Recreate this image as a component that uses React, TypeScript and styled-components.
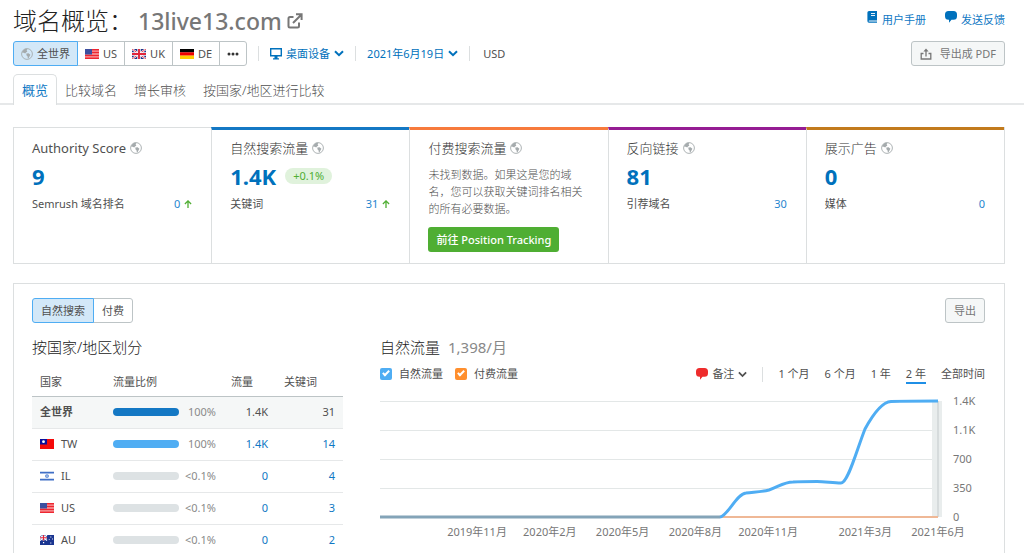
import React from 'react';
import styled, { createGlobalStyle, css } from 'styled-components';

const blue = '#0071bc';
const linkBlue = '#0f78c4';
const line = '#dcdfe0';

const Global = createGlobalStyle`
  *, *::before, *::after { box-sizing: border-box; }
  body { margin: 0; background: #fff; }
  body, button, select, input {
    font-family: "Noto Sans", "Noto Sans CJK SC", sans-serif;
    font-size: 11px;
    line-height: 16px;
    color: #505050;
  }
  body::-webkit-scrollbar { display: none; }
  html { scrollbar-width: none; }
  h1, h2, h3, p { margin: 0; font-weight: 300; }
  a { text-decoration: none; color: ${linkBlue}; }
  button { cursor: pointer; }
  svg { display: block; flex: none; }
`;

const Header = styled.header`
  padding: 7px 19px 0 13px;
`;
const HeaderRow = styled.div`
  display: flex;
  justify-content: space-between;
  align-items: flex-start;
`;
const Title = styled.h1`
  display: flex;
  align-items: center;
  font-size: 24px;
  line-height: 28px;
  color: #222;
`;
const Domain = styled.a`
  display: flex;
  align-items: center;
  gap: 5px;
  margin-left: 5px;
  font-size: 23px;
  line-height: 26px;
  font-weight: 500;
  color: #777;
`;
const HelpLinks = styled.nav`
  display: flex;
  gap: 19px;
  padding-top: 4px;
`;
const HelpLink = styled.a`
  display: flex;
  align-items: flex-start;
  gap: 4px;
  line-height: 18px;
`;
const Toolbar = styled.div`
  display: flex;
  align-items: center;
  margin-top: 6px;
`;
const Segments = styled.div`
  display: flex;
`;
const Segment = styled.button<{ $active?: boolean; $pad?: number }>`
  display: flex;
  align-items: center;
  gap: 4px;
  height: 25px;
  padding: 0 ${p => p.$pad ?? 7}px;
  margin-left: -1px;
  border: 1px solid #bdc4c6;
  background: #fff;
  white-space: nowrap;
  &:first-child { margin-left: 0; border-radius: 3px 0 0 3px; }
  &:last-child { border-radius: 0 3px 3px 0; }
  ${p => p.$active && css`
    position: relative;
    border-color: #4fadf3;
    background: #d3e8f8;
  `}
`;
const Divider = styled.span`
  width: 1px;
  height: 15px;
  background: ${line};
`;
const Filters = styled.div`
  display: flex;
  align-items: center;
  gap: 11px;
  flex: 1;
  margin-left: 11px;
`;
const Picker = styled.label`
  display: flex;
  align-items: center;
  gap: 4px;
  color: ${blue};
`;
const Select = styled.select`
  appearance: none;
  field-sizing: content;
  padding: 0;
  border: 0;
  background: none;
  color: inherit;
`;
const Currency = styled.span`
  padding-left: 2px;
`;
const GreyButton = styled.button`
  display: flex;
  align-items: center;
  gap: 8px;
  height: 25px;
  padding: 0 8px;
  border: 1px solid #bdc4c6;
  border-radius: 3px;
  background: #f5f7f7;
  color: #777;
`;
const TabBar = styled.nav`
  display: flex;
  gap: 17px;
  height: 31px;
  margin-top: 8px;
  padding-left: 13px;
  border-bottom: 2px solid #e6e8e9;
`;
const Tab = styled.a<{ $active?: boolean }>`
  height: 31px;
  font-size: 13px;
  line-height: 32px;
  font-weight: 300;
  color: #505050;
  ${p => p.$active && css`
    margin-right: -9px;
    padding: 0 8px;
    border: 1px solid ${line};
    border-bottom: 0;
    border-radius: 5px 5px 0 0;
    background: #fff;
    line-height: 30px;
    font-weight: 400;
    color: ${linkBlue};
  `}
`;
const Main = styled.main`
  display: flex;
  flex-direction: column;
  gap: 19px;
  padding: 22px 19px 20px 13px;
`;
const Cards = styled.section`
  display: grid;
  grid-template-columns: repeat(5, 1fr);
  min-height: 137px;
  border: 1px solid ${line};
  border-width: 0 1px 1px 0;
`;
const Card = styled.article<{ $accent?: string }>`
  padding: ${p => (p.$accent ? 8 : 10)}px 19px 10px 18px;
  border-left: 1px solid ${line};
  border-top: ${p => (p.$accent ? `3px solid ${p.$accent}` : `1px solid ${line}`)};
`;
const CardTitle = styled.h2`
  display: flex;
  align-items: center;
  gap: 4px;
  font-size: 13px;
  line-height: 20px;
  color: #333;
  &:lang(en) { font-weight: 400; color: #505050; }
`;
const Figure = styled.div`
  display: flex;
  align-items: center;
  gap: 9px;
  margin: 4px 0 5px;
  font-size: 22px;
  line-height: 28px;
  font-weight: 700;
  color: ${blue};
`;
const Badge = styled.span`
  padding: 0 8px;
  border-radius: 8px;
  background: #e0f2dc;
  font-size: 11px;
  line-height: 16px;
  font-weight: 400;
  color: #4fae33;
`;
const Stat = styled.div`
  display: flex;
  justify-content: space-between;
  line-height: 18px;
`;
const StatValue = styled.a`
  display: flex;
  align-items: center;
  gap: 4px;
  color: #1f86cf;
`;
const Note = styled.p`
  margin: 8px 0 10px;
  line-height: 17px;
  color: #505050;
`;
const GreenButton = styled.button`
  height: 25px;
  padding: 0 8px;
  border: 0;
  border-radius: 3px;
  background: #4fae33;
  font-weight: 500;
  color: #fff;
  white-space: nowrap;
`;
const Panel = styled.section`
  padding: 14px 19px 20px 18px;
  border: 1px solid ${line};
`;
const PanelTop = styled.div`
  display: flex;
  justify-content: space-between;
`;
const Columns = styled.div`
  display: grid;
  grid-template-columns: 311px 1fr;
  gap: 37px;
  margin-top: 12px;
`;
const SectionTitle = styled.h3`
  display: flex;
  gap: 8px;
  font-size: 15px;
  line-height: 24px;
  color: #222;
`;
const Total = styled.span`
  font-weight: 400;
  color: #888;
`;
const Table = styled.table`
  width: 100%;
  margin-top: 10px;
  border-collapse: collapse;
  table-layout: fixed;
  th { font-weight: 400; }
`;
const HeadCell = styled.th<{ $right?: number }>`
  height: 27px;
  padding: 0 ${p => p.$right ?? 0}px 0 ${p => (p.$right ? 0 : 8)}px;
  border-bottom: 1px solid #bdc4c6;
  text-align: ${p => (p.$right ? 'right' : 'left')};
`;
const Row = styled.tr<{ $total?: boolean }>`
  height: 32px;
  border-bottom: 1px solid #e6e8e9;
  background: ${p => (p.$total ? '#f5f7f7' : '#fff')};
`;
const Cell = styled.td<{ $right?: boolean }>`
  padding: 0 8px;
  text-align: ${p => (p.$right ? 'right' : 'left')};
`;
const Country = styled.span<{ $bold?: boolean }>`
  display: flex;
  align-items: center;
  gap: 7px;
  font-weight: ${p => (p.$bold ? 700 : 400)};
`;
const Share = styled.div`
  display: flex;
  align-items: center;
  justify-content: space-between;
  color: #8a8a8a;
`;
const Bar = styled.span<{ $color: string }>`
  width: 66px;
  height: 8px;
  border-radius: 4px;
  background: ${p => p.$color};
`;
const Controls = styled.div`
  display: flex;
  align-items: center;
  justify-content: space-between;
  margin-top: 5px;
  height: 20px;
`;
const Group = styled.div<{ $gap: number }>`
  display: flex;
  align-items: center;
  gap: ${p => p.$gap}px;
`;
const CheckLabel = styled.label`
  display: flex;
  align-items: center;
  gap: 7px;
`;
const Check = styled.input<{ $color: string }>`
  appearance: none;
  display: flex;
  justify-content: center;
  width: 12px;
  height: 12px;
  margin: 0;
  border-radius: 2px;
  background: ${p => p.$color};
  &:checked::after {
    content: '';
    width: 4px;
    height: 7px;
    margin-top: 1px;
    border: solid #fff;
    border-width: 0 2px 2px 0;
    transform: rotate(45deg);
  }
`;
const PlainButton = styled.button<{ $active?: boolean }>`
  display: flex;
  align-items: center;
  gap: 4px;
  padding: 2px 0 0;
  border: 0;
  border-bottom: 2px solid ${p => (p.$active ? '#1f8fe6' : 'transparent')};
  background: none;
  white-space: nowrap;
`;
const ChartBox = styled.div`
  margin-top: 16px;
  padding-right: 47px;
`;
const ChartSvg = styled.svg`
  width: 100%;
  height: 140px;
  overflow: visible;
  text { font-size: 11px; fill: #777; }
`;

const Globe = ({ color = '#a5abad' }: { color?: string }) => (
  <svg width="12" height="12" viewBox="0 0 12 12">
    <circle cx="6" cy="6" r="5.4" fill="none" stroke={color} strokeWidth="0.9" />
    <path d="M1.2 4C2 2 3.5 1 5.2 .8L6.4 1.6 5.6 2.6 6.4 3.4 5 4.4 4.2 5.4 2.8 4.8 1.4 4.8z" fill={color} />
    <path d="M5.4 5.6L7.6 5.2 9.4 6.8 8.6 8.2 7.4 10.4 6.8 10.2 6.6 8.4 5.4 7.2z" fill={color} />
  </svg>
);

const Chevron = ({ weight = 2, size = 10 }: { weight?: number; size?: number }) => (
  <svg width={size} height="7" viewBox="0 0 10 7" fill="none" stroke="currentColor" strokeWidth={weight}>
    <path d="M1 1.2L5 5.2 9 1.2" />
  </svg>
);

const UpArrow = () => (
  <svg width="8" height="8" viewBox="0 0 8 8" fill="none" stroke="#4fae33" strokeWidth="1.3">
    <path d="M4 8V1M.9 4L4 .9 7.1 4" />
  </svg>
);

const Bubble = ({ color, size = 12 }: { color: string; size?: number }) => (
  <svg width={size} height={size} viewBox="0 0 12 12">
    <path d="M3.5 0h5A3.5 3.5 0 0 1 12 3.500v1.800A3.500 3.500 0 0 1 8.500 8.800H6.500L4 11.800V8.800H3.500A3.500 3.500 0 0 1 0 5.300V3.500A3.500 3.500 0 0 1 3.500 0z" fill={color} />
  </svg>
);

const flags: Record<string, React.ReactNode> = {
  US: (
    <>
      <path fill="#f7a3a5" d="M0 0h14v10H0z" />
      <path stroke="#ee2630" strokeWidth="1.5" d="M0 .8h14M0 3.600h14M0 6.400h14M0 9.200h14" />
      <path fill="#3c4f9f" d="M0 0h7v5.500H0z" />
    </>
  ),
  UK: (
    <>
      <path fill="#1f3488" d="M0 0h14v10H0z" />
      <path stroke="#fff" strokeWidth="2" d="M0 0l14 10M14 0L0 10" />
      <path stroke="#e0243a" strokeWidth=".8" d="M0 0l14 10M14 0L0 10" />
      <path stroke="#fff" strokeWidth="3.400" d="M7 0v10M0 5h14" />
      <path stroke="#e0243a" strokeWidth="1.900" d="M7 0v10M0 5h14" />
    </>
  ),
  DE: (
    <>
      <path fill="#000" d="M0 0h14v3.400H0z" />
      <path fill="#e00" d="M0 3.300h14v3.400H0z" />
      <path fill="#fc0" d="M0 6.600h14V10H0z" />
    </>
  ),
  TW: (
    <>
      <path fill="#f50a0a" d="M0 0h14v10H0z" />
      <path fill="#0a0f9c" d="M0 0h7v5.500H0z" />
      <circle cx="3.500" cy="2.700" r="1.400" fill="#fff" />
    </>
  ),
  IL: (
    <>
      <path fill="#fff" d="M0 0h14v10H0z" />
      <path fill="#3f6fc6" d="M0 .8h14v1.600H0zM0 7.800h14v1.600H0z" />
      <path fill="none" stroke="#5b8ad6" strokeWidth=".7" d="M7 3.200l1.700 2.800H5.300zM7 7L5.300 4.200h3.400z" />
    </>
  ),
  AU: (
    <>
      <path fill="#1a3590" d="M0 0h14v10H0z" />
      <path stroke="#fff" strokeWidth="1.200" d="M0 0l7 5.500M7 0L0 5.500" />
      <path stroke="#fff" strokeWidth="2" d="M3.500 0v5.500M0 2.700h7" />
      <path stroke="#e0243a" strokeWidth="1.100" d="M3.500 0v5.500M0 2.700h7" />
      <path fill="#fff" d="M3 7h1.200v1.200H3zM10.300 1.500h1v1h-1zM10.300 7.500h1v1h-1zM8.800 4.200h.9v.9h-.9zM12 3.600h.9v.9H12z" />
    </>
  ),
};

const Flag = ({ code }: { code: string }) => (
  <svg width="14" height="10" viewBox="0 0 14 10">{flags[code]}</svg>
);

const rows = [
  { code: 'TW', share: '100%', color: '#4fadf3', traffic: '1.4K', keywords: '14' },
  { code: 'IL', share: '<0.1%', color: '#dde2e4', traffic: '0', keywords: '4' },
  { code: 'US', share: '<0.1%', color: '#dde2e4', traffic: '0', keywords: '3' },
  { code: 'AU', share: '<0.1%', color: '#dde2e4', traffic: '0', keywords: '2' },
];

const months = [
  { label: '2019年11月', index: 4 },
  { label: '2020年2月', index: 7 },
  { label: '2020年5月', index: 10 },
  { label: '2020年8月', index: 13 },
  { label: '2020年11月', index: 16 },
  { label: '2021年3月', index: 20 },
  { label: '2021年6月', index: 23 },
];

const TrafficChart = () => (
  <ChartBox>
    <ChartSvg role="img" aria-label="自然流量">
      {['1.4K', '1.1K', '700', '350', '0'].map((label, i) => (
        <g key={label}>
          <line x1="0" x2="100%" y1={1.5 + i * 29} y2={1.5 + i * 29} stroke="#e3e7e7" />
          <text x="100%" y={5 + i * 29} dx="15">{label}</text>
        </g>
      ))}
      <svg x="100%" y="1" overflow="visible">
        <rect x="-6" width="10" height="116" fill="#e9eded" />
        <line y2="116" stroke="#c3c9cb" />
      </svg>
      <svg width="100%" height="120" viewBox="0 0 558 120" preserveAspectRatio="none" fill="none" overflow="visible">
        <path d="M0 117H558" stroke="#efb896" strokeWidth="2" />
        <path d="M0 117H340" stroke="#84a4b8" strokeWidth="3" />
        <path
          d="M340 117C348 116 356 94 366 93C374 92 382 92 389 90C398 87 404 82 413 82C421 81.500 429 81.500 437 81.500C445 81.500 453 83 461 83C468 83 476 52 485 29C491 18 501 2 511 1.500C527 1 542 1 558 1"
          stroke="#4fadf3"
          strokeWidth="3"
        />
      </svg>
      {months.map(m => (
        <text key={m.label} x={`${(m.index / 23) * 100}%`} y="136" textAnchor="middle">{m.label}</text>
      ))}
    </ChartSvg>
  </ChartBox>
);

export default function App() {
  return (
    <>
      <Global />
      <Header>
        <HeaderRow>
          <Title>
            域名概览：
            <Domain href="#domain">
              13live13.com
              <svg width="16" height="16" viewBox="0 0 16 16" fill="none" stroke="#777" strokeWidth="2">
                <path d="M6.500 4H3Q1.500 4 1.500 5.500V13Q1.500 14.500 3 14.500H10.500Q12 14.500 12 13V9.500M6 10L14 2M9 1.200h5.600V7" />
              </svg>
            </Domain>
          </Title>
          <HelpLinks>
            <HelpLink href="#manual">
              <svg width="11" height="12" viewBox="0 0 11 12">
                <path d="M2 0h8v9.400H2.400q-.8 0-.8.600t.8.600H10V11.700H2Q.4 11.700 .4 10V1.600Q.4 0 2 0z" fill={blue} />
                <path d="M4 2.500h4M4 4.500h4" stroke="#fff" strokeWidth=".9" />
              </svg>
              用户手册
            </HelpLink>
            <HelpLink href="#feedback"><Bubble color={blue} />发送反馈</HelpLink>
          </HelpLinks>
        </HeaderRow>
        <Toolbar>
          <Segments>
            <Segment $active><Globe />全世界</Segment>
            <Segment><Flag code="US" />US</Segment>
            <Segment><Flag code="UK" />UK</Segment>
            <Segment><Flag code="DE" />DE</Segment>
            <Segment aria-label="更多">
              <svg width="12" height="4" viewBox="0 0 12 4" fill="#333">
                <circle cx="2" cy="2" r="1.500" /><circle cx="6" cy="2" r="1.500" /><circle cx="10" cy="2" r="1.500" />
              </svg>
            </Segment>
          </Segments>
          <Filters>
            <Divider />
            <Picker>
              <svg width="12" height="12" viewBox="0 0 12 12">
                <path d="M.7 .7h10.600v7H.7z" fill="none" stroke={blue} strokeWidth="1.400" />
                <path d="M4.500 8h3v2.200H9V11.500H3V10.200h1.500z" fill={blue} />
              </svg>
              <Select aria-label="设备"><option>桌面设备</option></Select>
              <Chevron />
            </Picker>
            <Divider />
            <Picker>
              <Select aria-label="日期"><option>2021年6月19日</option></Select>
              <Chevron />
            </Picker>
            <Divider />
            <Currency>USD</Currency>
          </Filters>
          <GreyButton>
            <svg width="12" height="12" viewBox="0 0 12 12" fill="none" stroke="#777" strokeWidth="1.300">
              <path d="M3.500 5.500H1.200V11h9.600V5.500H8.500M6 8.500V2" />
              <path d="M3.400 3.500L6 .6 8.600 3.500z" fill="#777" stroke="none" />
            </svg>
            导出成 PDF
          </GreyButton>
        </Toolbar>
      </Header>
      <TabBar>
        <Tab href="#overview" $active>概览</Tab>
        <Tab href="#compare">比较域名</Tab>
        <Tab href="#growth">增长审核</Tab>
        <Tab href="#countries">按国家/地区进行比较</Tab>
      </TabBar>
      <Main>
        <Cards>
          <Card>
            <CardTitle lang="en">Authority Score<Globe /></CardTitle>
            <Figure>9</Figure>
            <Stat>Semrush 域名排名<StatValue href="#rank">0<UpArrow /></StatValue></Stat>
          </Card>
          <Card $accent="#1478c4">
            <CardTitle>自然搜索流量<Globe /></CardTitle>
            <Figure>1.4K<Badge>+0.1%</Badge></Figure>
            <Stat>关键词<StatValue href="#keywords">31<UpArrow /></StatValue></Stat>
          </Card>
          <Card $accent="#f77a3c">
            <CardTitle>付费搜索流量<Globe /></CardTitle>
            <Note>未找到数据。如果这是您的域名，您可以获取关键词排名相关的所有必要数据。</Note>
            <GreenButton>前往 Position Tracking</GreenButton>
          </Card>
          <Card $accent="#951c93">
            <CardTitle>反向链接<Globe /></CardTitle>
            <Figure>81</Figure>
            <Stat>引荐域名<StatValue href="#referring">30</StatValue></Stat>
          </Card>
          <Card $accent="#c27a1c">
            <CardTitle>展示广告<Globe /></CardTitle>
            <Figure>0</Figure>
            <Stat>媒体<StatValue href="#publishers">0</StatValue></Stat>
          </Card>
        </Cards>
        <Panel>
          <PanelTop>
            <Segments>
              <Segment $active $pad={8}>自然搜索</Segment>
              <Segment $pad={8}>付费</Segment>
            </Segments>
            <GreyButton>导出</GreyButton>
          </PanelTop>
          <Columns>
            <div>
              <SectionTitle>按国家/地区划分</SectionTitle>
              <Table>
                <colgroup>
                  <col width="73" />
                  <col width="119" />
                  <col width="52" />
                  <col width="67" />
                </colgroup>
                <thead>
                  <tr>
                    <HeadCell>国家</HeadCell>
                    <HeadCell>流量比例</HeadCell>
                    <HeadCell $right={23}>流量</HeadCell>
                    <HeadCell $right={26}>关键词</HeadCell>
                  </tr>
                </thead>
                <tbody>
                  <Row $total>
                    <Cell><Country $bold>全世界</Country></Cell>
                    <Cell><Share><Bar $color="#1478c4" />100%</Share></Cell>
                    <Cell $right>1.4K</Cell>
                    <Cell $right>31</Cell>
                  </Row>
                  {rows.map(r => (
                    <Row key={r.code}>
                      <Cell><Country><Flag code={r.code} />{r.code}</Country></Cell>
                      <Cell><Share><Bar $color={r.color} />{r.share}</Share></Cell>
                      <Cell $right><a href="#traffic">{r.traffic}</a></Cell>
                      <Cell $right><a href="#keywords">{r.keywords}</a></Cell>
                    </Row>
                  ))}
                </tbody>
              </Table>
            </div>
            <div>
              <SectionTitle>自然流量<Total>1,398/月</Total></SectionTitle>
              <Controls>
                <Group $gap={12}>
                  <CheckLabel><Check type="checkbox" defaultChecked $color="#4fadf3" />自然流量</CheckLabel>
                  <CheckLabel><Check type="checkbox" defaultChecked $color="#ff8f2e" />付费流量</CheckLabel>
                </Group>
                <Group $gap={15}>
                  <PlainButton aria-haspopup="menu"><Bubble color="#ee2c2c" />备注<Chevron weight={2} size={9} /></PlainButton>
                  <Divider />
                  <PlainButton>1 个月</PlainButton>
                  <PlainButton>6 个月</PlainButton>
                  <PlainButton>1 年</PlainButton>
                  <PlainButton $active>2 年</PlainButton>
                  <PlainButton>全部时间</PlainButton>
                </Group>
              </Controls>
              <TrafficChart />
            </div>
          </Columns>
        </Panel>
      </Main>
    </>
  );
}
